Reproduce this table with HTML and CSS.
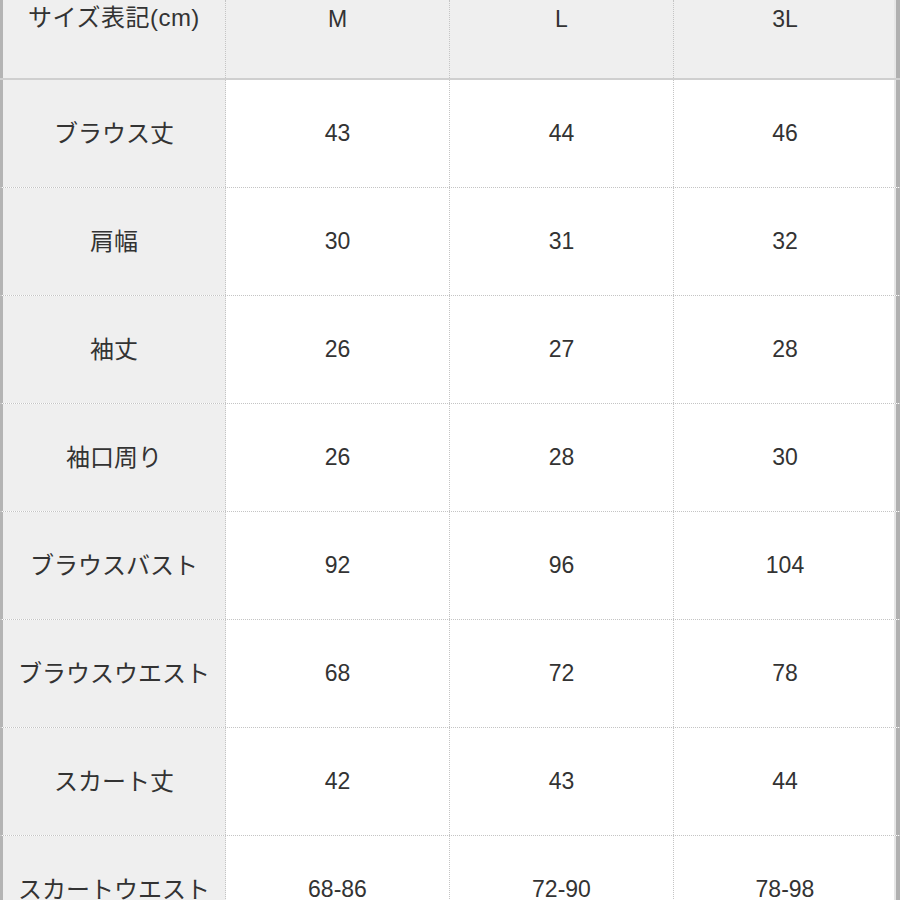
FILE: index.html
```html
<!DOCTYPE html>
<html lang="ja">
<head>
<meta charset="utf-8">
<link rel="stylesheet" href="styles.css">
</head>
<body>
<div class="table">
  <div class="row head">
    <div class="cell label">サイズ表記(cm)</div>
    <div class="cell">M</div>
    <div class="cell">L</div>
    <div class="cell last">3L</div>
  </div>
  <div class="row">
    <div class="cell label">ブラウス丈</div>
    <div class="cell">43</div>
    <div class="cell">44</div>
    <div class="cell last">46</div>
  </div>
  <div class="row">
    <div class="cell label">肩幅</div>
    <div class="cell">30</div>
    <div class="cell">31</div>
    <div class="cell last">32</div>
  </div>
  <div class="row">
    <div class="cell label">袖丈</div>
    <div class="cell">26</div>
    <div class="cell">27</div>
    <div class="cell last">28</div>
  </div>
  <div class="row">
    <div class="cell label">袖口周り</div>
    <div class="cell">26</div>
    <div class="cell">28</div>
    <div class="cell last">30</div>
  </div>
  <div class="row">
    <div class="cell label">ブラウスバスト</div>
    <div class="cell">92</div>
    <div class="cell">96</div>
    <div class="cell last">104</div>
  </div>
  <div class="row">
    <div class="cell label">ブラウスウエスト</div>
    <div class="cell">68</div>
    <div class="cell">72</div>
    <div class="cell last">78</div>
  </div>
  <div class="row">
    <div class="cell label">スカート丈</div>
    <div class="cell">42</div>
    <div class="cell">43</div>
    <div class="cell last">44</div>
  </div>
  <div class="row">
    <div class="cell label">スカートウエスト</div>
    <div class="cell">68-86</div>
    <div class="cell">72-90</div>
    <div class="cell last">78-98</div>
  </div>
</div>
</body>
</html>
```
FILE: styles.css
```css
html, body {
  margin: 0;
  padding: 0;
  background: #ffffff;
  overflow: hidden;
}
.table {
  width: 900px;
  font-family: "Liberation Sans", "Noto Sans CJK JP", sans-serif;
  font-size: 23px;
  color: #333333;
}
.row {
  display: grid;
  grid-template-columns: 226px 224px 224px 226px;
  height: 108px;
  box-sizing: border-box;
  border-bottom: 1px dotted #c4c4c4;
}
.cell {
  display: flex;
  align-items: center;
  justify-content: center;
  border-right: 1px dotted #c4c4c4;
  box-sizing: border-box;
  white-space: nowrap;
}
.cell.label {
  background: #efefef;
  border-left: 3px solid #b4b4b4;
  font-size: 24px;
  padding-bottom: 5px;
}
.cell.last {
  border-right: 4px solid #b0b0b0;
  box-shadow: inset -2px 0 0 #e6e6e6;
}
.row.head {
  height: 80px;
  background: #efefef;
  border-bottom: 2px solid #cfcfcf;
}
.row.head .cell {
  align-items: flex-start;
  line-height: 38px;
}
.row.head .cell.label {
  font-size: 24px;
  letter-spacing: 0.5px;
  padding-bottom: 0;
  padding-right: 0;
  line-height: 36px;
}
.row.head .cell.label .u {
  font-family: "Noto Sans CJK JP", sans-serif;
}
```
